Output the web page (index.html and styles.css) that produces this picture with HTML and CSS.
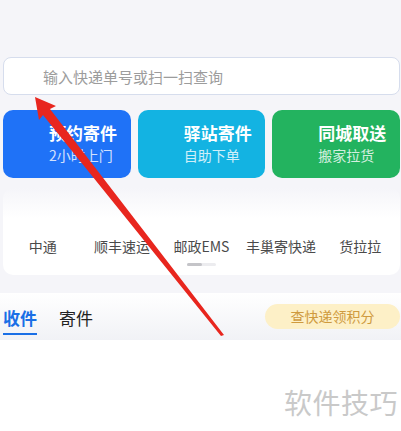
FILE: index.html
```html
<!DOCTYPE html>
<html lang="zh-CN">
<head>
    <meta charset="UTF-8">
    <meta name="viewport" content="width=device-width, initial-scale=1.0">
    <title>查快递</title>
    <link rel="stylesheet" href="styles.css">
</head>
<body>
    <div class="page">
        <div class="search-box">
            <span class="placeholder">输入快递单号或扫一扫查询</span>
        </div>

        <div class="services">
            <div class="service blue">
                <div class="service-title">预约寄件</div>
                <div class="service-sub">2小时上门</div>
            </div>
            <div class="service cyan">
                <div class="service-title">驿站寄件</div>
                <div class="service-sub">自助下单</div>
            </div>
            <div class="service green">
                <div class="service-title">同城取送</div>
                <div class="service-sub">搬家拉货</div>
            </div>
        </div>

        <div class="couriers">
            <div class="courier-list">
                <span>中通</span>
                <span>顺丰速运</span>
                <span>邮政EMS</span>
                <span>丰巢寄快递</span>
                <span>货拉拉</span>
            </div>
            <div class="scroll-bar"><span></span></div>
        </div>

        <div class="tabs">
            <span class="tab active">收件</span>
            <span class="tab">寄件</span>
            <span class="points">查快递领积分</span>
        </div>

        <div class="content">
            <span class="watermark">软件技巧</span>
        </div>
    </div>

    <!-- red annotation arrow drawn over the screenshot -->
    <svg class="arrow" width="401" height="431" viewBox="0 0 401 431">
        <polygon fill="#e8261e" points="35,97 56,106 50,109 224,335 221,336 43,115 39,120"/>
    </svg>
</body>
</html>
```

FILE: styles.css
```css
body {
    margin: 0;
    background: #f5f5f9;
    font-family: "Noto Sans CJK SC", "Noto Sans", sans-serif;
    color: #333;
    overflow: hidden;
}

.page {
    padding-top: 57px;
}

.search-box {
    margin: 0 1px 0 3px;
    height: 38px;
    border: 1px solid #d6dded;
    border-radius: 8px;
    background: #fff;
    display: flex;
    align-items: center;
    padding-left: 39px;
    box-sizing: border-box;
}

.placeholder {
    font-size: 15px;
    color: #9c9c9c;
}

.services {
    display: grid;
    grid-template-columns: repeat(3, 1fr);
    gap: 7px;
    margin: 15px 1px 0 3px;
}

.service {
    height: 68px;
    border-radius: 10px;
    padding: 11px 0 0 46px;
    box-sizing: border-box;
    color: #fff;
}

.service.blue { background: #1f72f7; }
.service.cyan { background: #13b3e2; }
.service.green { background: #23b35f; }

.service-title {
    font-size: 17px;
    font-weight: bold;
    line-height: 24px;
}

.service-sub {
    font-size: 14px;
    line-height: 20px;
    opacity: 0.8;
}

.couriers {
    margin: 10px 1px 0 3px;
    height: 87px;
    border-radius: 10px;
    background: linear-gradient(to bottom, #f5f5f9, #fff 35%);
    box-sizing: border-box;
    padding-top: 47px;
}

.courier-list {
    display: grid;
    grid-template-columns: repeat(5, 1fr);
    text-align: center;
    font-size: 14px;
    line-height: 22px;
    color: #4a4a4a;
}

.scroll-bar {
    width: 29px;
    height: 3px;
    margin: 6px auto 0;
    background: #ececef;
    border-radius: 2px;
}

.scroll-bar span {
    display: block;
    width: 15px;
    height: 3px;
    border-radius: 2px;
    background: #c4c4c8;
}

.tabs {
    margin-top: 18px;
    height: 47px;
    background: linear-gradient(to bottom, #fff, #f1f2f6);
    display: flex;
    align-items: center;
    padding: 0 1px 0 3px;
}

.tab {
    font-size: 17px;
    line-height: 24px;
    color: #222;
    margin-right: 22px;
    padding-top: 2px;
    position: relative;
}

.tab.active {
    color: #1a6fe6;
    font-weight: bold;
}

.tab.active::after {
    content: "";
    position: absolute;
    left: 0;
    right: 0;
    bottom: -5px;
    height: 2px;
    background: #1a6fe6;
}

.points {
    margin-left: auto;
    width: 135px;
    height: 25px;
    border-radius: 13px;
    background: #fdf0c7;
    color: #cf9a3e;
    font-size: 14px;
    line-height: 25px;
    text-align: center;
}

.content {
    height: 100px;
    background: #fff;
    display: flex;
    justify-content: flex-end;
    padding: 42px 3px 0 0;
    box-sizing: border-box;
}

.watermark {
    font-size: 28px;
    line-height: 40px;
    color: #c9c9c9;
    letter-spacing: 0.5px;
}

.arrow {
    position: absolute;
    left: 0;
    top: 0;
    pointer-events: none;
}
```
